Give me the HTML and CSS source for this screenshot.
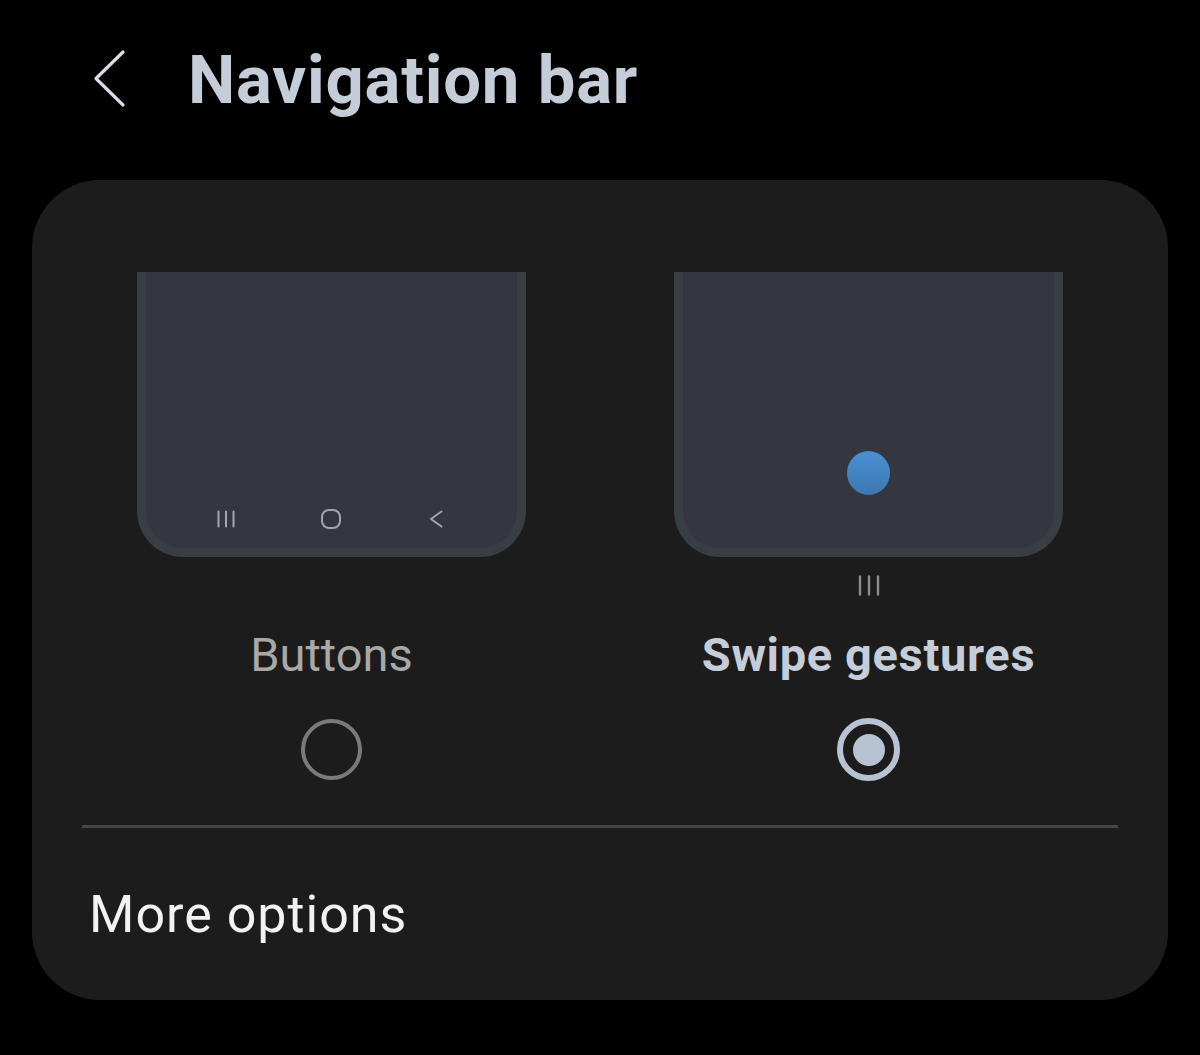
FILE: index.html
```html
<!DOCTYPE html>
<html lang="en">
<head>
<meta charset="utf-8">
<title>Navigation bar</title>
<link rel="stylesheet" href="styles.css">
</head>
<body>
<header class="header">
  <svg class="back" width="34" height="60" viewBox="0 0 34 60" aria-hidden="true">
    <path d="M30 3 L3 29.5 L30 56" fill="none" stroke="#d9dde5" stroke-width="3.2" stroke-linecap="round" stroke-linejoin="round"/>
  </svg>
  <h1 class="title">Navigation bar</h1>
</header>

<main class="card">
  <div class="options">
    <div class="option">
      <div class="phone">
        <div class="navrow">
          <svg class="navicon" width="24" height="24" viewBox="0 0 24 24" aria-hidden="true">
            <path d="M4.5 4.5v15M12 4.5v15M19.5 4.5v15" stroke="#a0a6ad" stroke-width="2" stroke-linecap="round" fill="none"/>
          </svg>
          <svg class="navicon" width="24" height="24" viewBox="0 0 24 24" aria-hidden="true">
            <rect x="3" y="3" width="18" height="18" rx="7" ry="7" stroke="#a0a6ad" stroke-width="2" fill="none"/>
          </svg>
          <svg class="navicon" width="24" height="24" viewBox="0 0 24 24" aria-hidden="true">
            <path d="M17.5 4.5 L7 12 L17.5 19.5" stroke="#a0a6ad" stroke-width="2" stroke-linecap="round" stroke-linejoin="round" fill="none"/>
          </svg>
        </div>
      </div>
      <div class="handle handle-hidden"></div>
      <div class="label">Buttons</div>
      <div class="radio-wrap"><span class="radio"></span></div>
    </div>

    <div class="option">
      <div class="phone phone-gesture">
        <span class="dot"></span>
      </div>
      <div class="handle">
        <svg width="24" height="21" viewBox="0 0 24 21" aria-hidden="true">
          <path d="M3 1.5v18M12 1.5v18M21 1.5v18" stroke="#8c8c8c" stroke-width="2.4" stroke-linecap="round" fill="none"/>
        </svg>
      </div>
      <div class="label label-selected">Swipe gestures</div>
      <div class="radio-wrap"><span class="radio radio-selected"></span></div>
    </div>
  </div>

  <div class="divider"></div>

  <div class="more">More options</div>
</main>
</body>
</html>
```

FILE: styles.css
```css
* {
  box-sizing: border-box;
}

html, body {
  margin: 0;
  padding: 0;
  background: #000;
}

body {
  width: 1200px;
  height: 1055px;
  overflow: hidden;
  font-family: Roboto, "Noto Sans", "Liberation Sans", sans-serif;
}

.header {
  display: flex;
  align-items: flex-start;
  height: 180px;
  padding: 47px 0 0 93px;
}

.back {
  display: block;
  margin-top: 2px;
  flex: none;
}

.title {
  margin: 0 0 0 61px;
  font-size: 67px;
  line-height: 67px;
  font-weight: 700;
  color: #c5cdd9;
  letter-spacing: 0.8px;
}

.card {
  margin: 0 32px;
  height: 820px;
  background: #1c1c1c;
  border-radius: 68px;
  padding-top: 92px;
}

.options {
  display: flex;
  justify-content: center;
  gap: 148px;
}

.option {
  width: 389px;
  display: flex;
  flex-direction: column;
  align-items: center;
}

.phone {
  width: 389px;
  height: 285px;
  background: #34373e;
  border: 9px solid #393e45;
  border-top: none;
  border-radius: 0 0 46px 46px;
  display: flex;
  flex-direction: column;
  justify-content: flex-end;
  align-items: center;
}

.navrow {
  display: flex;
  gap: 81px;
  padding-bottom: 17px;
  margin-left: -2px;
}

.navicon {
  display: block;
}

.dot {
  display: block;
  width: 43px;
  height: 44px;
  border-radius: 50%;
  background: linear-gradient(#4a90d2, #3d78b3);
  margin-bottom: 53px;
}

.handle {
  margin-top: 18px;
  height: 21px;
}

.handle svg {
  display: block;
}

.handle-hidden {
  visibility: hidden;
}

.label {
  margin-top: 31px;
  font-size: 47px;
  line-height: 56px;
  color: #a8a8a8;
  font-weight: 400;
  white-space: nowrap;
}

.label-selected {
  color: #c5cdd9;
  font-weight: 700;
  letter-spacing: 0.65px;
}

.radio-wrap {
  margin-top: 35px;
  height: 63px;
  display: flex;
  align-items: center;
  justify-content: center;
}

.radio {
  display: block;
  width: 61px;
  height: 61px;
  border: 4px solid #7a7a7a;
  border-radius: 50%;
}

.radio-selected {
  width: 63px;
  height: 63px;
  border: 6.5px solid #b7c3d3;
  display: flex;
  align-items: center;
  justify-content: center;
}

.radio-selected::after {
  content: "";
  display: block;
  width: 32px;
  height: 32px;
  border-radius: 50%;
  background: #b7c3d3;
}

.divider {
  margin: 44px 50px 0;
  height: 2.5px;
  background: #444548;
}

.more {
  margin-top: 57px;
  padding-left: 57px;
  font-size: 52px;
  line-height: 60px;
  letter-spacing: 1px;
  color: #f2f2f2;
}
```
